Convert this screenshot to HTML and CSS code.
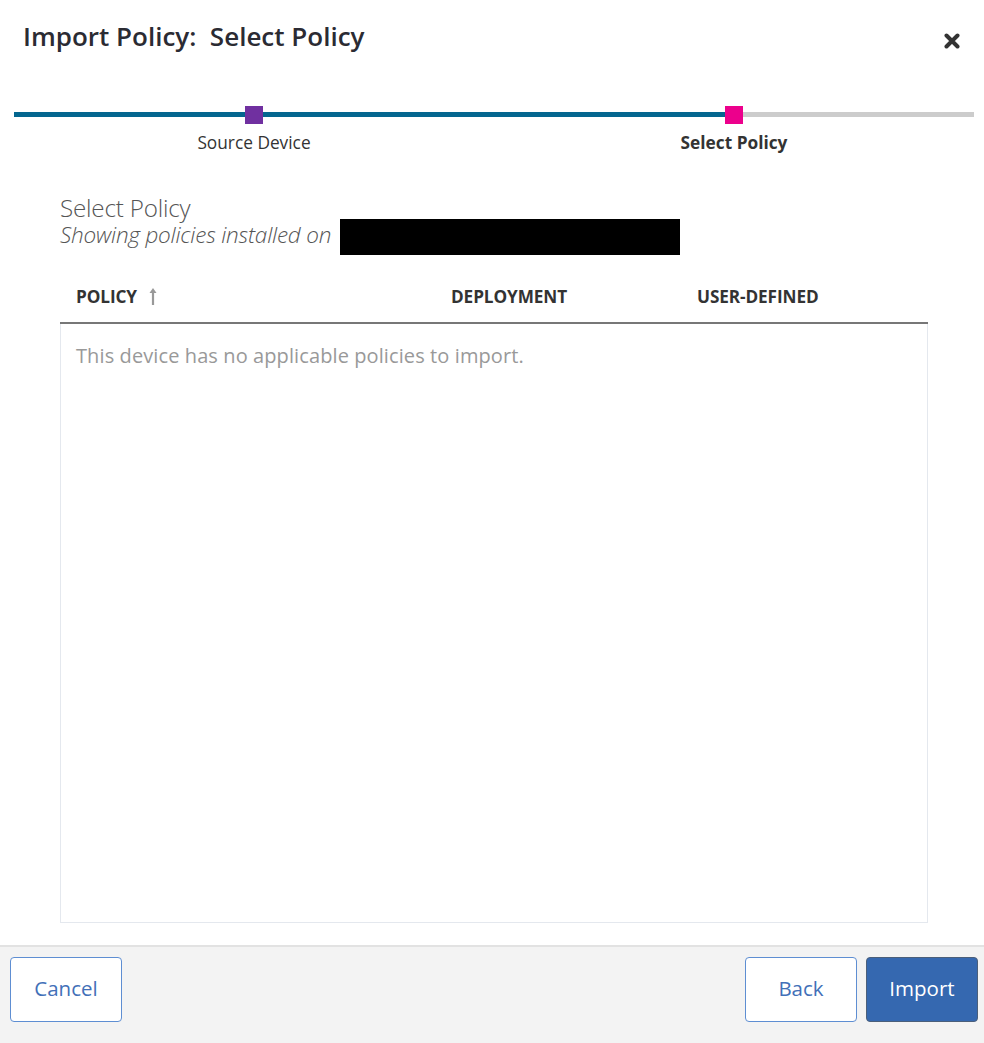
FILE: index.html
```html
<!DOCTYPE html>
<html>
<head>
<meta charset="utf-8">
<link rel="stylesheet" href="styles.css">
</head>
<body>
<div class="dialog">
  <div class="header">
    <h1 class="title">Import Policy:&nbsp; Select Policy</h1>
    <button class="close" aria-label="Close">
      <svg width="16" height="16" viewBox="0 0 16 16"><path d="M2.5 2.5 L13.5 13.5 M13.5 2.5 L2.5 13.5" stroke="#333" stroke-width="4" stroke-linecap="round"/></svg>
    </button>
  </div>
  <div class="stepper">
    <div class="track">
      <div class="track-done"></div>
      <div class="track-rest"></div>
    </div>
    <div class="steps">
      <div class="step">
        <span class="marker marker-done"></span>
        <span class="step-label">Source Device</span>
      </div>
      <div class="step">
        <span class="marker marker-current"></span>
        <span class="step-label current">Select Policy</span>
      </div>
    </div>
  </div>
  <div class="content">
    <div class="section-title">Select Policy</div>
    <div class="subtitle"><span class="sub-text">Showing policies installed on</span><span class="redacted"></span></div>
    <div class="table">
      <div class="thead">
        <div class="th th-policy">POLICY <span class="sort">
          <svg width="8" height="18" viewBox="0 0 8 18"><path d="M4 3 V18" stroke="#999" stroke-width="2.2"/><path d="M0.5 6 L4 1 L7.5 6 Z" fill="#999"/></svg></span></div>
        <div class="th th-deploy">DEPLOYMENT</div>
        <div class="th th-user">USER-DEFINED</div>
      </div>
      <div class="tbody">
        <div class="empty">This device has no applicable policies to import.</div>
      </div>
    </div>
  </div>
  <div class="footer">
    <button class="btn">Cancel</button>
    <div class="right">
      <button class="btn">Back</button>
      <button class="btn btn-primary">Import</button>
    </div>
  </div>
</div>
</body>
</html>
```
FILE: styles.css
```css
* { box-sizing: border-box; }
html, body { margin: 0; padding: 0; background: #fff; }
body { font-family: "Open Sans", "Liberation Sans", sans-serif; color: #333; }
.dialog { width: 984px; height: 1043px; display: flex; flex-direction: column; }
.header { display: flex; justify-content: space-between; align-items: flex-start; padding: 18px 24px 0 23px; height: 100px; }
.title { margin: 0; font-size: 26px; font-weight: 600; color: #2b2b33; line-height: 36px; }
.close { border: 0; background: none; padding: 0; margin-top: 15px; width: 16px; height: 16px; cursor: pointer; }
.close svg { display: block; }
.stepper { position: relative; padding: 0 10px 0 14px; height: 88px; margin-top: 12px; margin-bottom: -12px; }
.track { display: flex; height: 5px; }
.track-done { width: 721px; background: #04668f; height: 5px; }
.track-rest { flex: 1; background: #cccccc; height: 5px; }
.steps { position: absolute; top: -6px; left: 14px; right: 10px; }
.step { position: absolute; display: flex; flex-direction: column; align-items: center; width: 200px; }
.step:first-child { left: 140px; }
.step:last-child { left: 620px; }
.marker { width: 18px; height: 18px; display: block; }
.marker-done { background: #7030a0; }
.marker-current { background: #ec008c; }
.step-label { margin-top: 8px; font-size: 17.3px; line-height: 22px; color: #333; }
.step-label.current { font-weight: 700; }
.content { flex: 1; padding: 6px 56px 0 60px; display: flex; flex-direction: column; }
.section-title { font-size: 24.2px; font-weight: 300; color: #555; line-height: 28px; letter-spacing: -0.2px; }
.subtitle { display: flex; align-items: flex-start; height: 35px; }
.sub-text { font-size: 22.5px; font-style: italic; font-weight: 300; color: #555; line-height: 26px; margin-top: 0; letter-spacing: -0.2px; }
.redacted { display: inline-block; background: #000; width: 340px; height: 36px; margin-left: 9px; margin-top: -3px; }
.table { flex: 1; display: flex; flex-direction: column; margin-top: 21px; padding-bottom: 22px; }
.thead { display: flex; height: 46px; align-items: flex-start; border-bottom: 2px solid #777; padding-top: 8px; }
.th { font-size: 17.2px; font-weight: 700; color: #333; line-height: 22px; letter-spacing: -0.1px; }
.th-policy { width: 391px; padding-left: 16px; display: flex; align-items: center; }
.sort { display: inline-block; margin-left: 12px; height: 18px; margin-top: -2px; }
.sort svg { display: block; }
.th-deploy { width: 246px; }
.th-user { flex: 1; }
.tbody { flex: 1; border: 1px solid #e4e8ee; border-top: none; }
.empty { padding: 19px 15px; font-size: 20px; color: #999; line-height: 26px; letter-spacing: 0.1px; }
.footer { height: 98px; background: #f3f3f3; border-top: 2px solid #e2e2e2; display: flex; justify-content: space-between; padding: 10px 6px 0 10px; }
.right { display: flex; gap: 9px; }
.btn { font-family: "Open Sans", "Liberation Sans", sans-serif; width: 112px; height: 65px; background: #fff; border: 1.5px solid #5e8ed2; border-radius: 4px; color: #4270b8; font-size: 20.5px; cursor: pointer; padding: 0 0 3px; }
.btn-primary { background: #3568b0; border-color: #4b5f7a; color: #fff; }
```
